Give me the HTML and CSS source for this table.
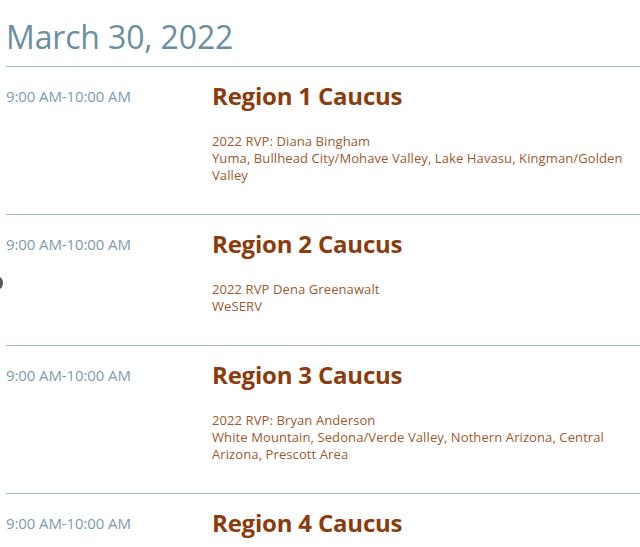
FILE: index.html
```html
<!DOCTYPE html>
<html lang="en">
<head>
<meta charset="utf-8">
<title>Schedule</title>
<link rel="stylesheet" href="styles.css">
</head>
<body>
<span class="edge-dot" aria-hidden="true"></span>
<main class="day">
  <h1 class="day-title">March 30, 2022</h1>
  <ul class="sessions">
    <li class="session">
      <div class="time">9:00 AM-10:00 AM</div>
      <div class="info">
        <h2 class="name">Region 1 Caucus</h2>
        <p class="desc">2022 RVP: Diana Bingham<br>Yuma, Bullhead City/Mohave Valley, Lake Havasu, Kingman/Golden Valley</p>
      </div>
    </li>
    <li class="session">
      <div class="time">9:00 AM-10:00 AM</div>
      <div class="info">
        <h2 class="name">Region 2 Caucus</h2>
        <p class="desc">2022 RVP Dena Greenawalt<br>WeSERV</p>
      </div>
    </li>
    <li class="session">
      <div class="time">9:00 AM-10:00 AM</div>
      <div class="info">
        <h2 class="name">Region 3 Caucus</h2>
        <p class="desc">2022 RVP: Bryan Anderson<br>White Mountain, Sedona/Verde Valley, Nothern Arizona, Central Arizona, Prescott Area</p>
      </div>
    </li>
    <li class="session">
      <div class="time">9:00 AM-10:00 AM</div>
      <div class="info">
        <h2 class="name">Region 4 Caucus</h2>
      </div>
    </li>
  </ul>
</main>
</body>
</html>
```
FILE: styles.css
```css
html, body {
  margin: 0;
  padding: 0;
  background: #ffffff;
  overflow: hidden;
}
body {
  font-family: "Open Sans", "Liberation Sans", sans-serif;
  position: relative;
  height: 547px;
}
.edge-dot {
  position: absolute;
  left: -5px;
  top: 277px;
  width: 8px;
  height: 12px;
  border-radius: 50%;
  background: #555b5e;
}
.day {
  padding-left: 6px;
}
.day-title {
  margin: 0;
  padding-top: 17px;
  padding-bottom: 9px;
  font-family: "Open Sans", sans-serif;
  font-weight: 400;
  font-size: 32px;
  line-height: 40px;
  color: #6b8fa0;
  border-bottom: 1px solid #9fbcc5;
  letter-spacing: -0.15px;
}
.sessions {
  list-style: none;
  margin: 0;
  padding: 0;
}
.session {
  display: grid;
  grid-template-columns: 206px 1fr;
  padding: 14px 0 30px;
  border-bottom: 1px solid #9fbcc5;
}
.time {
  padding-top: 5px;
  font-size: 15px;
  line-height: 20px;
  color: #7b9cac;
  letter-spacing: -0.1px;
}
.name {
  margin: 0;
  font-family: "Open Sans", sans-serif;
  font-weight: 700;
  font-size: 24px;
  line-height: 30px;
  color: #8b3c0c;
  letter-spacing: -0.2px;
}
.desc {
  margin: 22px 0 0;
  font-size: 13px;
  line-height: 17px;
  color: #9b5a2e;
  padding-right: 10px;
  letter-spacing: 0.1px;
}
```
